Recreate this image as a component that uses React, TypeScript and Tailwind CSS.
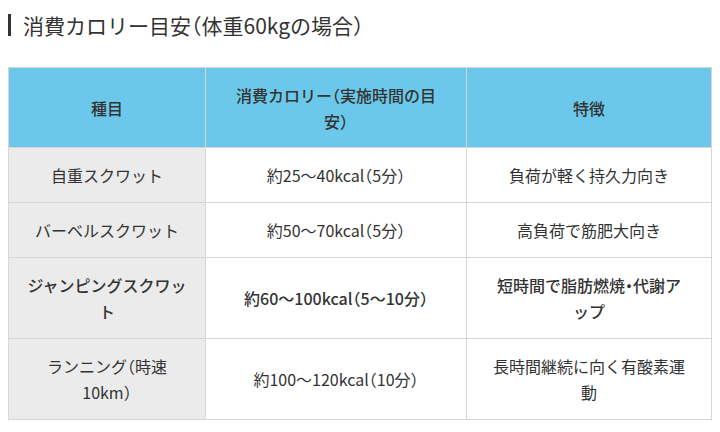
import type { ReactNode } from "react";

type Row = {
  name: ReactNode;
  kcal: ReactNode;
  note: ReactNode;
  strong?: boolean;
};

const rows: Row[] = [
  { name: "自重スクワット", kcal: "約25〜40kcal（5分）", note: "負荷が軽く持久力向き" },
  { name: "バーベルスクワット", kcal: "約50〜70kcal（5分）", note: "高負荷で筋肥大向き" },
  {
    name: (
      <>
        ジャンピングスクワッ
        <br />ト
      </>
    ),
    kcal: "約60〜100kcal（5〜10分）",
    note: (
      <>
        短時間で脂肪燃焼・代謝ア
        <br />ップ
      </>
    ),
    strong: true,
  },
  {
    name: (
      <>
        ランニング（時速
        <br />
        10km）
      </>
    ),
    kcal: "約100〜120kcal（10分）",
    note: (
      <>
        長時間継続に向く有酸素運
        <br />動
      </>
    ),
  },
];

export default function App() {
  return (
    <div
      className="w-[720px] h-[432px] bg-white text-[#333] overflow-hidden"
      style={{ fontFamily: '"Noto Sans CJK JP", "Noto Sans", sans-serif', fontFeatureSettings: '"halt"' }}
    >
      {/* Heading */}
      <div className="pt-[11px] pl-2 flex items-center">
        <span className="w-[3px] h-[22px] bg-[#333]" />
        <h2 className="ml-[12px] text-[21px] leading-[28px] text-[#333]">消費カロリー目安（体重60kgの場合）</h2>
      </div>

      <table className="mt-[28px] ml-2 border-collapse text-[16px] leading-[26px] text-center">
        <colgroup>
          <col className="w-[197px]" />
          <col className="w-[261px]" />
          <col className="w-[245px]" />
        </colgroup>
        <thead>
          <tr className="bg-[#6cc8ea]">
            <th className="h-[80px] border border-[#d6d6d6] px-3 font-medium">種目</th>
            <th className="h-[80px] border border-[#d6d6d6] px-3 font-medium">
              消費カロリー（実施時間の目
              <br />
              安）
            </th>
            <th className="h-[80px] border border-[#d6d6d6] px-3 font-medium">特徴</th>
          </tr>
        </thead>
        <tbody>
          {rows.map((r, i) => (
            <tr key={i} className={r.strong ? "font-medium" : "font-normal"}>
              <td className="bg-[#ebebeb] border border-[#d6d6d6] px-3 py-[14px]">{r.name}</td>
              <td className="bg-white border border-[#d6d6d6] px-3 py-[14px]">{r.kcal}</td>
              <td className="bg-white border border-[#d6d6d6] px-3 py-[14px]">{r.note}</td>
            </tr>
          ))}
        </tbody>
      </table>
    </div>
  );
}
